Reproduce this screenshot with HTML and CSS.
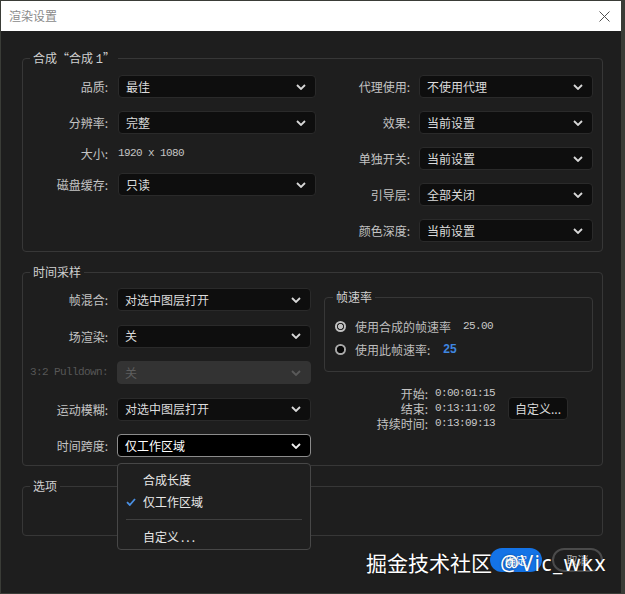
FILE: index.html
```html
<!DOCTYPE html>
<html lang="zh-CN">
<head>
<meta charset="utf-8">
<title>渲染设置</title>
<link rel="stylesheet" href="styles.css">
</head>
<body>
<div class="dialog">
  <div class="titlebar">
    <span class="title">渲染设置</span>
    <svg class="close" width="11" height="11" viewBox="0 0 11 11"><path d="M0.5 0.5 L10.5 10.5 M10.5 0.5 L0.5 10.5" stroke="#505050" stroke-width="1" fill="none"/></svg>
  </div>
  <div class="content">
    <fieldset class="group g1">
      <legend>合成“合成 <span class="mono">1</span>”</legend>
      <div class="g1-body">
        <div class="form left">
          <span class="lbl">品质:</span>
          <div class="select"><span>最佳</span><svg class="chev" width="10" height="6" viewBox="0 0 10 6"><path d="M1 1 L5 5 L9 1" fill="none" stroke="currentColor" stroke-width="1.8"/></svg></div>
          <span class="lbl">分辨率:</span>
          <div class="select"><span>完整</span><svg class="chev" width="10" height="6" viewBox="0 0 10 6"><path d="M1 1 L5 5 L9 1" fill="none" stroke="currentColor" stroke-width="1.8"/></svg></div>
          <span class="lbl short">大小:</span>
          <span class="size-val mono">1920 x 1080</span>
          <span class="lbl">磁盘缓存:</span>
          <div class="select"><span>只读</span><svg class="chev" width="10" height="6" viewBox="0 0 10 6"><path d="M1 1 L5 5 L9 1" fill="none" stroke="currentColor" stroke-width="1.8"/></svg></div>
        </div>
        <div class="form right">
          <span class="lbl">代理使用:</span>
          <div class="select"><span>不使用代理</span><svg class="chev" width="10" height="6" viewBox="0 0 10 6"><path d="M1 1 L5 5 L9 1" fill="none" stroke="currentColor" stroke-width="1.8"/></svg></div>
          <span class="lbl">效果:</span>
          <div class="select"><span>当前设置</span><svg class="chev" width="10" height="6" viewBox="0 0 10 6"><path d="M1 1 L5 5 L9 1" fill="none" stroke="currentColor" stroke-width="1.8"/></svg></div>
          <span class="lbl">单独开关:</span>
          <div class="select"><span>当前设置</span><svg class="chev" width="10" height="6" viewBox="0 0 10 6"><path d="M1 1 L5 5 L9 1" fill="none" stroke="currentColor" stroke-width="1.8"/></svg></div>
          <span class="lbl">引导层:</span>
          <div class="select"><span>全部关闭</span><svg class="chev" width="10" height="6" viewBox="0 0 10 6"><path d="M1 1 L5 5 L9 1" fill="none" stroke="currentColor" stroke-width="1.8"/></svg></div>
          <span class="lbl">颜色深度:</span>
          <div class="select"><span>当前设置</span><svg class="chev" width="10" height="6" viewBox="0 0 10 6"><path d="M1 1 L5 5 L9 1" fill="none" stroke="currentColor" stroke-width="1.8"/></svg></div>
        </div>
      </div>
    </fieldset>

    <fieldset class="group g2">
      <legend>时间采样</legend>
      <div class="g2-body">
        <div class="form left2">
          <span class="lbl">帧混合:</span>
          <div class="select"><span>对选中图层打开</span><svg class="chev" width="10" height="6" viewBox="0 0 10 6"><path d="M1 1 L5 5 L9 1" fill="none" stroke="currentColor" stroke-width="1.8"/></svg></div>
          <span class="lbl">场渲染:</span>
          <div class="select"><span>关</span><svg class="chev" width="10" height="6" viewBox="0 0 10 6"><path d="M1 1 L5 5 L9 1" fill="none" stroke="currentColor" stroke-width="1.8"/></svg></div>
          <span class="lbl mono dim">3:2 Pulldown:</span>
          <div class="select disabled"><span>关</span><svg class="chev" width="10" height="6" viewBox="0 0 10 6"><path d="M1 1 L5 5 L9 1" fill="none" stroke="currentColor" stroke-width="1.8"/></svg></div>
          <span class="lbl">运动模糊:</span>
          <div class="select"><span>对选中图层打开</span><svg class="chev" width="10" height="6" viewBox="0 0 10 6"><path d="M1 1 L5 5 L9 1" fill="none" stroke="currentColor" stroke-width="1.8"/></svg></div>
          <span class="lbl">时间跨度:</span>
          <div class="select active"><span>仅工作区域</span><svg class="chev" width="10" height="6" viewBox="0 0 10 6"><path d="M1 1 L5 5 L9 1" fill="none" stroke="currentColor" stroke-width="1.8"/></svg>
            <div class="menu">
              <div class="mi"><span class="ck"></span>合成长度</div>
              <div class="mi"><span class="ck"><svg width="10" height="8" viewBox="0 0 10 8"><path d="M1 4.2 L3.8 7 L9 1" fill="none" stroke="#4a8fe2" stroke-width="1.8"/></svg></span>仅工作区域</div>
              <div class="sep"></div>
              <div class="mi"><span class="ck"></span>自定义<span class="dots">...</span></div>
            </div>
          </div>
        </div>
        <div class="rcol">
          <fieldset class="fps">
            <legend>帧速率</legend>
            <div class="radio-row"><span class="radio on"></span>使用合成的帧速率<span class="fps-val mono">25.00</span></div>
            <div class="radio-row"><span class="radio off"></span>使用此帧速率:<span class="fps-num">25</span></div>
          </fieldset>
          <div class="times">
            <div class="tgrid">
              <span class="tl">开始:</span><span class="tv mono">0:00:01:15</span>
              <span class="tl">结束:</span><span class="tv mono">0:13:11:02</span>
              <span class="tl">持续时间:</span><span class="tv mono">0:13:09:13</span>
            </div>
            <div class="btn-custom">自定义...</div>
          </div>
        </div>
      </div>
    </fieldset>

    <fieldset class="group g3">
      <legend>选项</legend>
      <div class="g3-body"></div>
    </fieldset>

    <div class="actions">
      <div class="btn ok">确定</div>
      <div class="btn cancel">取消</div>
    </div>
  </div>
  <div class="watermark">掘金技术社区<span class="latin">@Vic_wkx</span></div>
</div>
</body>
</html>
```

FILE: styles.css
```css
* { box-sizing: border-box; }
html, body { margin: 0; padding: 0; }
body {
  width: 625px;
  height: 594px;
  overflow: hidden;
  background: #3a3c37;
  font-family: "Noto Sans CJK SC", "Noto Sans", sans-serif;
  font-size: 12px;
}
.dialog {
  position: relative;
  margin: 1px 0 0 1px;
  width: 620px;
  height: 592px;
  background: #1e1e1e;
}
.titlebar {
  height: 30px;
  background: #ffffff;
  display: flex;
  align-items: center;
  justify-content: space-between;
  padding: 0 11px 0 8px;
}
.title { color: #8a8a8a; font-size: 12px; line-height: 16px; }
.close { display: block; }

.content { padding: 19px 18px 0 21px; }

.mono {
  font-family: "Liberation Mono", monospace;
  font-size: 11px;
  letter-spacing: -0.6px;
}

.group {
  margin: 0;
  padding: 0;
  min-width: 0;
  border: 1px solid #373737;
  border-radius: 4px;
}
.group > legend,
.fps > legend {
  height: 16px;
  padding: 0 3px;
  font-size: 12px;
  line-height: 16px;
  color: #d0d0d0;
  white-space: nowrap;
}
.group > legend { margin-left: 7px; }
.group > legend .mono { font-size: 12px; letter-spacing: 0; line-height: 12px; vertical-align: baseline; }

.g1 { padding: 9px 9px 9px 0; }
.g1-body { display: flex; align-items: flex-start; }

.form { display: grid; row-gap: 13px; align-items: center; align-content: start; }
.form.left { grid-template-columns: 85px 198px; column-gap: 10px; }
.form.right { grid-template-columns: 94px 174px; column-gap: 9px; }
.form.left2 { grid-template-columns: 85px 194px; column-gap: 9px; row-gap: 13.5px; }

.lbl { text-align: right; color: #c4c4c4; line-height: 23px; white-space: nowrap; }
.lbl.short { line-height: 13px; }
.lbl.dim { color: #575757; }
.size-val { color: #c4c4c4; line-height: 13px; }

.select {
  height: 23px;
  display: flex;
  align-items: center;
  justify-content: space-between;
  padding: 0 9px 0 7px;
  background: #0e0e0e;
  border: 1px solid #2a2a2a;
  border-radius: 4px;
  color: #dcdcdc;
  line-height: 16px;
}
.select .chev { color: #d8d8d8; flex: none; display: block; }
.select.disabled { background: #333333; border-color: #333333; color: #5e5e5e; }
.select.disabled .chev { color: #5a5a5a; }
.select.active { position: relative; background: #000; border-color: #8c8c8c; color: #fff; }
.select.active .chev { color: #f0f0f0; }

.menu {
  position: absolute;
  left: -1px;
  top: 28px;
  width: 194px;
  padding: 5px 0 1px;
  background: #1f1f1f;
  border: 1px solid #474747;
  border-radius: 4px;
  z-index: 5;
}
.mi {
  display: flex;
  align-items: center;
  height: 22px;
  padding-left: 8px;
  color: #e8e8e8;
  line-height: 22px;
}
.ck { width: 17px; flex: none; display: flex; align-items: center; }
.ck svg { display: block; }
.dots { letter-spacing: 2px; margin-left: 2px; }
.sep { height: 1px; margin: 6px 8px; background: #3f3f3f; }

.g2 { margin-top: 12px; padding: 8px 9px 8px 0; }
.g2-body { display: flex; gap: 13px; align-items: flex-start; }
.rcol { flex: 1; min-width: 0; }

.fps {
  margin: 1px 0 0;
  padding: 12px 10px 13px 0;
  min-width: 0;
  border: 1px solid #373737;
  border-radius: 4px;
}
.fps > legend { margin-left: 8px; }
.radio-row {
  display: flex;
  align-items: center;
  height: 18px;
  padding-left: 10px;
  color: #bdbdbd;
  white-space: nowrap;
}
.radio-row + .radio-row { margin-top: 5px; }
.radio { width: 11px; height: 11px; border-radius: 50%; margin-right: 9px; flex: none; }
.radio.on { background: radial-gradient(circle, #c0c0c0 0 2.2px, #262626 2.8px 3.4px, #c0c0c0 3.9px); }
.radio.off { background: radial-gradient(circle, #060606 0 3.4px, #a9a9a9 3.9px); }
.fps-val { margin-left: 12px; color: #c8c8c8; }
.fps-num { margin-left: 13px; color: #3f86e0; font-weight: bold; font-family: "Liberation Sans", sans-serif; font-size: 12px; }

.times { display: flex; align-items: center; margin-top: 13.5px; }
.tgrid { display: grid; grid-template-columns: 104px auto; column-gap: 7px; line-height: 15px; }
.tl { text-align: right; color: #c2c2c2; white-space: nowrap; }
.tv { color: #c8c8c8; }
.btn-custom {
  margin-left: 13px;
  width: 60px;
  height: 23px;
  display: flex;
  align-items: center;
  justify-content: center;
  background: #0d0d0d;
  border: 1px solid #2a2a2a;
  border-radius: 4px;
  color: #dadada;
}

.g3 { margin-top: 12px; }
.g3-body { height: 41px; }

.actions { display: flex; justify-content: flex-end; gap: 10px; margin-top: 12px; }
.btn {
  height: 24px;
  border-radius: 12px;
  font-size: 11px;
  display: flex;
  align-items: center;
  justify-content: center;
}
.btn.ok { width: 52px; background: #1473e6; color: #fff; }
.btn.cancel { width: 51px; border: 2px solid #4b4b4b; color: #b0b0b0; }

.watermark {
  position: absolute;
  left: 365px;
  top: 549px;
  font-size: 21px;
  line-height: 24px;
  color: #ffffff;
  white-space: nowrap;
  text-shadow: 0 0 2px rgba(0,0,0,0.5);
  z-index: 6;
}
.watermark .latin { font-family: "Noto Sans", sans-serif; letter-spacing: 1.5px; margin-left: 8px; }
```
